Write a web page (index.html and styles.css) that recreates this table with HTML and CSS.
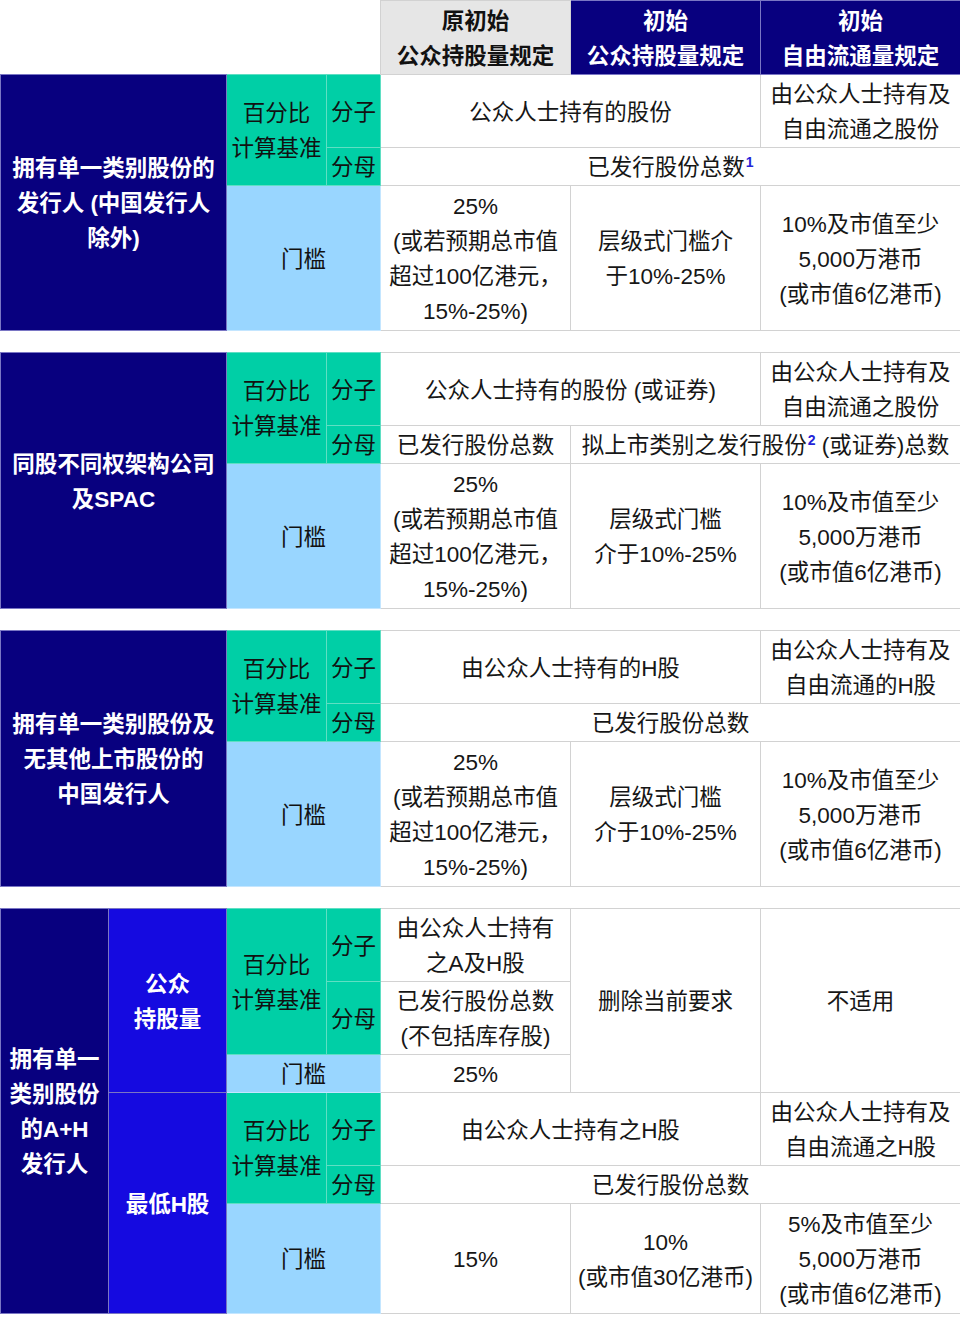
FILE: index.html
```html
<!DOCTYPE html>
<html lang="zh-CN">
<head>
<meta charset="utf-8">
<title>公众持股量规定</title>
<link rel="stylesheet" href="styles.css">
</head>
<body>
<table class="grid">
  <colgroup>
    <col class="c-a1"><col class="c-a2"><col class="c-b"><col class="c-c"><col class="c-d"><col class="c-e"><col class="c-f">
  </colgroup>
  <tbody>
    <tr class="head">
      <td class="blank" colspan="4"></td>
      <td class="h-gray">原初始<br>公众持股量规定</td>
      <td class="h-navy">初始<br>公众持股量规定</td>
      <td class="h-navy">初始<br>自由流通量规定</td>
    </tr>

    <!-- Section 1 -->
    <tr>
      <td class="navy" colspan="2" rowspan="3">拥有单一类别股份的<br>发行人 (中国发行人<br>除外)</td>
      <td class="green" rowspan="2">百分比<br>计算基准</td>
      <td class="green">分子</td>
      <td class="w" colspan="2">公众人士持有的股份</td>
      <td class="w">由公众人士持有及<br>自由流通之股份</td>
    </tr>
    <tr>
      <td class="green">分母</td>
      <td class="w" colspan="3">已发行股份总数<sup class="fn">1</sup></td>
    </tr>
    <tr>
      <td class="lblue" colspan="2">门槛</td>
      <td class="w tall">25%<br>(或若预期总市值<br>超过100亿港元，<br>15%-25%)</td>
      <td class="w">层级式门槛介<br>于10%-25%</td>
      <td class="w">10%及市值至少<br>5,000万港币<br>(或市值6亿港币)</td>
    </tr>
    <tr class="gap"><td colspan="7"></td></tr>

    <!-- Section 2 -->
    <tr>
      <td class="navy" colspan="2" rowspan="3">同股不同权架构公司<br>及SPAC</td>
      <td class="green" rowspan="2">百分比<br>计算基准</td>
      <td class="green">分子</td>
      <td class="w" colspan="2">公众人士持有的股份 (或证券)</td>
      <td class="w">由公众人士持有及<br>自由流通之股份</td>
    </tr>
    <tr>
      <td class="green">分母</td>
      <td class="w">已发行股份总数</td>
      <td class="w" colspan="2">拟上市类别之发行股份<sup class="fn">2</sup> (或证券)总数</td>
    </tr>
    <tr>
      <td class="lblue" colspan="2">门槛</td>
      <td class="w tall">25%<br>(或若预期总市值<br>超过100亿港元，<br>15%-25%)</td>
      <td class="w">层级式门槛<br>介于10%-25%</td>
      <td class="w">10%及市值至少<br>5,000万港币<br>(或市值6亿港币)</td>
    </tr>
    <tr class="gap"><td colspan="7"></td></tr>

    <!-- Section 3 -->
    <tr>
      <td class="navy" colspan="2" rowspan="3">拥有单一类别股份及<br>无其他上市股份的<br>中国发行人</td>
      <td class="green" rowspan="2">百分比<br>计算基准</td>
      <td class="green">分子</td>
      <td class="w" colspan="2">由公众人士持有的H股</td>
      <td class="w">由公众人士持有及<br>自由流通的H股</td>
    </tr>
    <tr>
      <td class="green">分母</td>
      <td class="w" colspan="3">已发行股份总数</td>
    </tr>
    <tr>
      <td class="lblue" colspan="2">门槛</td>
      <td class="w tall">25%<br>(或若预期总市值<br>超过100亿港元，<br>15%-25%)</td>
      <td class="w">层级式门槛<br>介于10%-25%</td>
      <td class="w">10%及市值至少<br>5,000万港币<br>(或市值6亿港币)</td>
    </tr>
    <tr class="gap"><td colspan="7"></td></tr>

    <!-- Section 4 -->
    <tr>
      <td class="navy" rowspan="6">拥有单一<br>类别股份<br>的A+H<br>发行人</td>
      <td class="blue" rowspan="3">公众<br>持股量</td>
      <td class="green" rowspan="2">百分比<br>计算基准</td>
      <td class="green">分子</td>
      <td class="w">由公众人士持有<br>之A及H股</td>
      <td class="w" rowspan="3">删除当前要求</td>
      <td class="w" rowspan="3">不适用</td>
    </tr>
    <tr>
      <td class="green">分母</td>
      <td class="w">已发行股份总数<br>(不包括库存股)</td>
    </tr>
    <tr>
      <td class="lblue" colspan="2">门槛</td>
      <td class="w">25%</td>
    </tr>
    <tr>
      <td class="blue" rowspan="3">最低H股</td>
      <td class="green" rowspan="2">百分比<br>计算基准</td>
      <td class="green">分子</td>
      <td class="w" colspan="2">由公众人士持有之H股</td>
      <td class="w">由公众人士持有及<br>自由流通之H股</td>
    </tr>
    <tr>
      <td class="green">分母</td>
      <td class="w" colspan="3">已发行股份总数</td>
    </tr>
    <tr>
      <td class="lblue" colspan="2">门槛</td>
      <td class="w">15%</td>
      <td class="w">10%<br>(或市值30亿港币)</td>
      <td class="w tall">5%及市值至少<br>5,000万港币<br>(或市值6亿港币)</td>
    </tr>
  </tbody>
</table>
</body>
</html>
```

FILE: styles.css
```css
html, body {
  margin: 0;
  padding: 0;
  background: #ffffff;
}

body {
  font-family: "Liberation Sans", "Noto Sans CJK SC", "Noto Sans", sans-serif;
  font-size: 22.5px;
  color: #161616;
}

.grid {
  width: 960px;
  table-layout: fixed;
  border-collapse: collapse;
  border-spacing: 0;
}

.c-a1 { width: 108px; }
.c-a2 { width: 118px; }
.c-b  { width: 100px; }
.c-c  { width: 54px; }
.c-d  { width: 190px; }
.c-e  { width: 190px; }
.c-f  { width: 200px; }

.grid td {
  padding: 2px 0 0;
  line-height: 35px;
  text-align: center;
  vertical-align: middle;
  white-space: nowrap;
  border: 1px solid #d2d2d2;
}

.grid td.tall {
  padding: 3px 0 1px;
}

.head td {
  font-weight: bold;
  padding: 3px 0 0;
}

.head td.blank {
  border: none;
  background: #ffffff;
}

.h-gray {
  background: #e6e6e6;
  color: #111111;
}

.h-navy {
  background: #08007f;
  color: #ffffff;
}

.gap td {
  height: 21px;
  padding: 0;
  border: none;
}

.navy {
  background: #08007f;
  color: #ffffff;
  font-weight: bold;
}

.blue {
  background: #150ae0;
  color: #ffffff;
  font-weight: bold;
}

.grid td.navy,
.grid td.blue,
.grid td.h-navy {
  border-color: #7a76c4;
}

.green {
  background: #00cfa6;
  color: #111111;
}

.grid td.green {
  border-color: #5fdfc3;
}

.lblue {
  background: #99d6ff;
  color: #111111;
}

.grid td.lblue {
  border-color: #c4e6ff;
}

.w {
  background: #ffffff;
  color: #161616;
}

.fn {
  color: #2424d8;
  font-weight: bold;
  font-size: 14px;
  line-height: 0;
  vertical-align: 8px;
  margin-left: 1px;
}
```
